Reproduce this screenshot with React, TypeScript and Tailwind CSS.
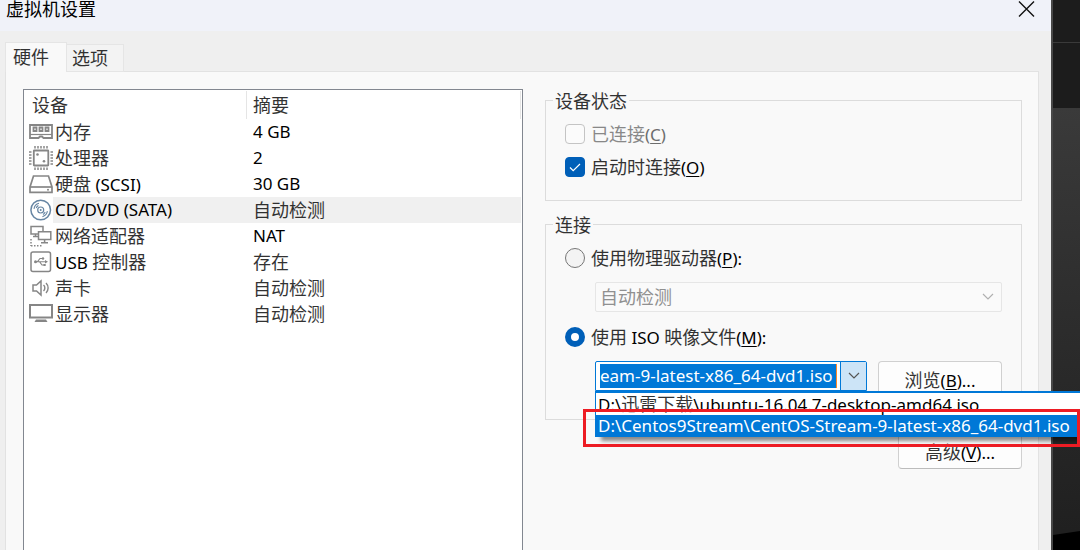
import { ReactNode, useState } from 'react';

interface Device {
  id: string;
  name: string;
  summary: string;
  icon: ReactNode;
}

const devices: Device[] = [
  {
    id: 'memory',
    name: '内存',
    summary: '4 GB',
    icon: (
      <>
        <path d="M1 6h22v13h-8.5l-1.5-1.5h-2L9.500 19H1z" strokeWidth="1.8" />
        <path d="M1 15.500h22" strokeWidth="1.200" />
        <path d="M4.500 8.500h3v3.500h-3zM10.500 8.500h3v3.500h-3zM16.500 8.500h3v3.500h-3z" strokeWidth="1.8" />
      </>
    ),
  },
  {
    id: 'cpu',
    name: '处理器',
    summary: '2',
    icon: (
      <>
        <rect x="4.800" y="5.500" width="14.500" height="15" rx="0.5" strokeWidth="1.8" />
        <path d="M6 1v2.500M9 1v2.500M12 1v2.500M15 1v2.500M18 1v2.500M6 22.500v2.500M9 22.500v2.500M12 22.500v2.500M15 22.500v2.500M18 22.500v2.500" />
        <path d="M0 7h2.500M0 10h2.500M0 13h2.500M0 16h2.500M0 19h2.500M21.500 7h2.500M21.500 10h2.500M21.500 13h2.500M21.500 16h2.500M21.500 19h2.500" />
        <circle cx="8.500" cy="9.500" r="1.300" fill="currentColor" stroke="none" />
        <circle cx="15" cy="16.300" r="1.300" fill="currentColor" stroke="none" />
      </>
    ),
  },
  {
    id: 'disk',
    name: '硬盘 (SCSI)',
    summary: '30 GB',
    icon: (
      <>
        <path d="M4.500 5h15L23 16v5.300H1V16z" strokeWidth="1.7" />
        <path d="M1 16h22" strokeWidth="1.7" />
        <circle cx="19" cy="18.700" r="1" fill="currentColor" stroke="none" />
      </>
    ),
  },
  {
    id: 'cd',
    name: 'CD/DVD (SATA)',
    summary: '自动检测',
    icon: (
      <g className="text-[#6685a3]">
        <circle cx="11.700" cy="13" r="9.800" stroke="currentColor" />
        <circle cx="11.700" cy="13" r="3" stroke="currentColor" strokeWidth="1.200" />
        <circle cx="11.700" cy="13" r="1" fill="currentColor" stroke="none" />
        <path d="M5 11.800a6.800 6.800 0 0 1 5-5.500M7.200 11a5 5 0 0 1 2.200-2.400M18.400 14.200a6.800 6.800 0 0 1-5 5.500M16.200 15a5 5 0 0 1-2.200 2.400" stroke="currentColor" strokeWidth="1.100" />
      </g>
    ),
  },
  {
    id: 'network',
    name: '网络适配器',
    summary: 'NAT',
    icon: (
      <>
        <path d="M9 11H2V3.500h12V8" />
        <path d="M9.500 8.700h12.300v7.800H9.500z" />
        <path d="M15.600 16.500v3M12 19.700h7M6.500 11v2.500M4 13.500h5" />
        <path d="M2 16v7M2 22.800h12" strokeDasharray="1.500 1.500" />
      </>
    ),
  },
  {
    id: 'usb',
    name: 'USB 控制器',
    summary: '存在',
    icon: (
      <>
        <rect x="2" y="3" width="19.500" height="19.500" rx="2" />
        <path d="M6 12.700h10.500M8.500 12.700l2.500-3.200h2M10.500 12.700l2.500 3.300h2" strokeWidth="1.100" />
        <circle cx="6.500" cy="12.700" r="1.500" fill="currentColor" stroke="none" />
        <circle cx="14" cy="9.500" r="1.200" fill="currentColor" stroke="none" />
        <path d="M16 10.900l3 1.800-3 1.800zM14.500 14.900h2.200v2.200h-2.200z" fill="currentColor" stroke="none" />
      </>
    ),
  },
  {
    id: 'sound',
    name: '声卡',
    summary: '自动检测',
    icon: (
      <>
        <path d="M4 10h3.500l4.500-4v14l-4.500-4H4z" />
        <path d="M14.500 10a4 4 0 0 1 0 6M17 8a7 7 0 0 1 0 10" strokeWidth="1.400" />
      </>
    ),
  },
  {
    id: 'display',
    name: '显示器',
    summary: '自动检测',
    icon: (
      <>
        <rect x="1" y="4" width="22" height="12.500" strokeWidth="2" />
        <path d="M7 18.500h10l1.500 2.500h-13z" fill="currentColor" stroke="none" />
      </>
    ),
  },
];

const isoFiles = [
  'D:\\迅雷下载\\ubuntu-16.04.7-desktop-amd64.iso',
  'D:\\Centos9Stream\\CentOS-Stream-9-latest-x86_64-dvd1.iso',
];

// Chinese runs are set one pixel larger than the Latin text around them
function Mixed({ text }: { text: string }) {
  return (
    <>
      {text.split(/([\u4e00-\u9fff]+)/).map((part, i) =>
        i % 2 === 1 ? <span key={i} className="text-[18px] opacity-80">{part}</span> : part
      )}
    </>
  );
}

function Caption({ text, accel, tail = '' }: { text: string; accel: string; tail?: string }) {
  return (
    <span className="whitespace-nowrap">
      <Mixed text={text} />(<u className="underline-offset-2">{accel}</u>){tail}
    </span>
  );
}

function Chevron({ className }: { className: string }) {
  return (
    <svg viewBox="0 0 12 8" className={className} fill="none" stroke="currentColor" strokeWidth="1.200">
      <path d="M1 1l5 5 5-5" />
    </svg>
  );
}

function DeviceTable() {
  const [selected, setSelected] = useState('cd');

  return (
    <div className="bg-white border border-b-0 border-[#828790] pt-px pr-px min-w-0">
      <table className="w-full table-fixed border-separate border-spacing-0 text-left">
        <thead>
          <tr className="h-7">
            <th className="w-[223px] p-0 pl-2 font-normal border-r border-[#e5e5e5]"><Mixed text="设备" /></th>
            <th className="p-0 pl-1.5 font-normal border-r border-[#e5e5e5]"><Mixed text="摘要" /></th>
          </tr>
        </thead>
        <tbody>
          {devices.map(device => {
            const bg = device.id === selected ? 'bg-[#f0f0f0]' : '';
            return (
              <tr key={device.id} className="h-[26px]" onClick={() => setSelected(device.id)}>
                <td className="p-0">
                  <div className="flex h-[26px] pl-[5px]">
                    <svg viewBox="0 0 24 26" className="w-6 h-[26px] flex-shrink-0 text-[#868686]" fill="none" stroke="currentColor" strokeWidth="1.500">
                      {device.icon}
                    </svg>
                    <span className={`flex-1 pl-0.5 leading-[26px] whitespace-nowrap ${bg}`}><Mixed text={device.name} /></span>
                  </div>
                </td>
                <td className="p-0">
                  <div className={`h-[26px] pl-1.5 leading-[26px] ${bg}`}><Mixed text={device.summary} /></div>
                </td>
              </tr>
            );
          })}
        </tbody>
      </table>
    </div>
  );
}

function StatusGroup() {
  const [autoConnect, setAutoConnect] = useState(true);

  return (
    <fieldset className="min-w-0 border border-[#dcdcdc] pt-[13px] pl-[19px] pb-[23px]">
      <legend className="-ml-3 px-0.5 h-[22px] leading-6"><Mixed text="设备状态" /></legend>
      <label className="flex items-center gap-1.5 h-5 text-[#6d6d6d]">
        <input type="checkbox" disabled className="appearance-none w-5 h-5 rounded border border-[#c4c4c4] bg-[#fbfbfb]" />
        <Caption text="已连接" accel="C" />
      </label>
      <label className="flex items-center gap-1.5 h-5 mt-[13px]">
        <span className="relative w-5 h-5">
          <input
            type="checkbox"
            checked={autoConnect}
            onChange={e => setAutoConnect(e.target.checked)}
            className="appearance-none block w-5 h-5 rounded border border-[#868686] checked:border-[#005fb8] checked:bg-[#005fb8]"
          />
          <svg viewBox="0 0 20 20" className="absolute inset-0 pointer-events-none" fill="none" stroke="white" strokeWidth="1.200">
            <path d="M5 10.500l3.200 3.200L15 7" />
          </svg>
        </span>
        <Caption text="启动时连接" accel="O" />
      </label>
    </fieldset>
  );
}

function IsoCombo() {
  const [value, setValue] = useState('eam-9-latest-x86_64-dvd1.iso');
  const [open, setOpen] = useState(true);
  const [active, setActive] = useState(1);

  return (
    <div className="relative w-[272px] h-[30px] flex bg-white border border-[#0078d7] rounded-t-xs">
      <div className="flex-1 min-w-0 py-0.5 pl-1 pr-[3px]">
        <input
          type="text"
          aria-label="ISO 映像文件"
          value={value}
          onChange={e => setValue(e.target.value)}
          className="block w-full h-6 p-0 bg-[#0078d7] text-white border-r border-[#ff8728] focus:outline-none"
        />
      </div>
      <button
        aria-label="展开"
        onClick={() => setOpen(!open)}
        className="w-[26px] flex items-center justify-center bg-[#cce4f7] border-l border-[#0078d7] text-[#555]"
      >
        <Chevron className="w-3 h-2" />
      </button>
      {open && (
        <div className="absolute z-20 -left-px top-[29px] w-[485px]">
          <ul role="listbox" aria-label="ISO 映像文件" className="bg-white border-t-2 border-l border-[#0078d7] shadow-[6px_4px_4px_rgba(0,0,0,0.45)]">
            {isoFiles.map((file, i) => (
              <li
                key={file}
                role="option"
                aria-selected={i === active}
                onClick={() => setActive(i)}
                className={`h-[22px] leading-[22px] pl-0.5 whitespace-nowrap ${i === active ? 'bg-[#0078d7] text-white' : ''}`}
              >
                <Mixed text={file} />
              </li>
            ))}
          </ul>
          {/* red frame around the chosen image */}
          <div className="absolute -left-3 right-0 top-[18px] h-[38px] border-3 border-[#ed1c24] pointer-events-none"></div>
        </div>
      )}
    </div>
  );
}

const pushButton = 'h-9 w-[124px] pt-0.5 flex items-center justify-center bg-[#fdfdfd] border border-[#d0d0d0] border-b-[#bcbcbc] rounded';

function ConnectionGroup() {
  const [source, setSource] = useState('iso');
  const radio = 'appearance-none w-5 h-5 rounded-full border border-[#767676] bg-[#f3f3f3] checked:border-[6px] checked:border-[#005fb8] checked:bg-white';

  return (
    <fieldset className="min-w-0 mt-3 border border-[#dcdcdc] pt-[13px] pl-[19px] pr-[19px] pb-[22px]">
      <legend className="-ml-3 px-0.5 h-[22px] leading-6"><Mixed text="连接" /></legend>
      <label className="flex items-center gap-1.5 h-5">
        <input type="radio" name="source" checked={source === 'drive'} onChange={() => setSource('drive')} className={radio} />
        <Caption text="使用物理驱动器" accel="P" tail=":" />
      </label>
      <div className="relative ml-[30px] mt-3.5">
        <select
          aria-label="物理驱动器"
          disabled
          className="appearance-none block w-full h-[30px] pl-1 text-[18px] text-[#909090] bg-[#fafafa] border border-[#e6e6e6] rounded-xs opacity-100"
        >
          <option>自动检测</option>
        </select>
        <Chevron className="absolute right-2 top-[11px] w-3 h-2 text-[#b0b0b0] pointer-events-none" />
      </div>
      <label className="flex items-center gap-1.5 h-5 mt-[15px]">
        <input type="radio" name="source" checked={source === 'iso'} onChange={() => setSource('iso')} className={radio} />
        <Caption text="使用 ISO 映像文件" accel="M" tail=":" />
      </label>
      <div className="flex items-start justify-between ml-[30px] mt-3.5">
        <IsoCombo />
        <button className={pushButton}><Caption text="浏览" accel="B" tail="..." /></button>
      </div>
    </fieldset>
  );
}

export default function App() {
  const [tab, setTab] = useState('hardware');

  return (
    <div className="h-screen flex overflow-hidden bg-[#1c1c1c] text-black text-[17px] font-['Noto_Sans','Noto_Sans_CJK_SC',sans-serif]">
      <div className="relative z-10 flex-1 min-w-0 flex flex-col bg-[#efefef]">
        {/* Title bar */}
        <header className="h-[31px] flex-shrink-0 flex items-start justify-between pl-1.5 pr-4 bg-[#f0f2f9]">
          <h1 className="leading-4 text-[18px] font-['Noto_Sans_CJK_SC',sans-serif]">虚拟机设置</h1>
          <button aria-label="关闭" className="pt-px">
            <svg viewBox="0 0 17 16" className="w-[17px] h-4" fill="none" stroke="#111" strokeWidth="1.400">
              <path d="M1 0.500l15 15M16 0.500l-15 15" />
            </svg>
          </button>
        </header>

        {/* Tabs */}
        <div role="tablist" className="relative z-10 flex items-end h-[41px] -mb-px pl-[5px] flex-shrink-0">
          <button
            role="tab"
            aria-selected={tab === 'hardware'}
            onClick={() => setTab('hardware')}
            className="h-[30px] w-[62px] pl-[7px] text-left bg-[#f9f9f9] border border-b-0 border-[#e5e5e5]"
          >
            <Mixed text="硬件" />
          </button>
          <button
            role="tab"
            aria-selected={tab === 'options'}
            onClick={() => setTab('options')}
            className="h-7 w-[57px] pl-[5px] text-left bg-[#f3f3f3] border border-l-0 border-[#e5e5e5]"
          >
            <Mixed text="选项" />
          </button>
        </div>

        {/* Page */}
        <div className="flex-1 ml-[5px] mr-3 grid grid-cols-[500fr_477fr] gap-[22px] pt-[17px] pl-[17px] pr-4 bg-[#f9f9f9] border border-b-0 border-[#e2e2e2]">
          <DeviceTable />
          <div className="min-w-0">
            <StatusGroup />
            <ConnectionGroup />
            <div className="flex justify-end mt-[13px]">
              <button className={pushButton}><Caption text="高级" accel="V" tail="..." /></button>
            </div>
          </div>
        </div>
      </div>

      {/* Window behind the dialog */}
      <div className="w-[29px] flex-shrink-0 flex flex-col border-l-2 border-[#484848]">
        <div className="h-[43px] border-b border-[#3a3a3a]"></div>
        <div className="h-[65px]"></div>
        <div className="flex-1 bg-linear-to-b from-[#3a3a3a] to-[#202020]"></div>
        <svg viewBox="0 0 27 20" className="w-full h-5 bg-black" preserveAspectRatio="none">
          <path d="M0 0h27v1L0 5z" fill="#202020" />
        </svg>
      </div>
    </div>
  );
}
